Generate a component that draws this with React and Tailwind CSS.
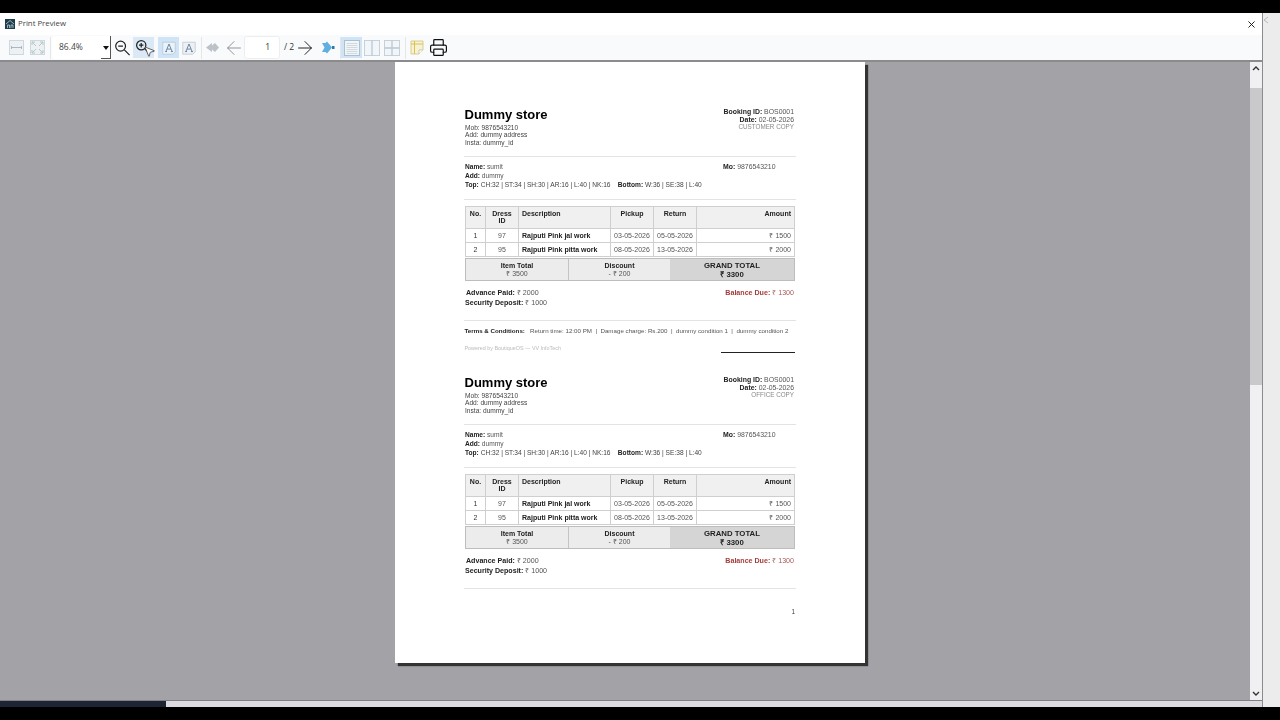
import { ArrowLeft, ArrowRight, MousePointer2, Printer, X } from 'lucide-react';

const Sep = ({ ml }) => <div className={`h-[22px] w-px bg-[#e4e6e8] ${ml}`} />;

const TextIcon = ({ boxed }) => (
  <svg viewBox="0 0 18 18" className="h-[16px] w-[16px]">
    <path d="M2 2.5h14v11l-3 2.5H2z" fill={boxed ? '#eaf3fb' : '#eef1f4'} stroke="#b5c2cd" strokeWidth="0.8" />
    <path d="M5.5 13 9 4.5 12.5 13M6.8 10.2h4.4M4.8 13h2M11.2 13h2.2" fill="none" stroke="#4f6e8c" strokeWidth="0.9" />
  </svg>
);

const Pages = ({ kind, dim }) => (
  <svg viewBox="0 0 18 18" className="h-[18px] w-[18px]">
    <rect x="1.5" y="1.5" width="15" height="15" fill="#f3f6f8" stroke={dim ? '#c6d2db' : '#aebfcc'} />
    {kind === 'one' && <path d="M3.5 4.5h11M3.5 6.5h11M3.5 8.5h11M3.5 10.5h11M3.5 12.5h11M3.5 14.5h11" stroke="#c0ccd5" strokeWidth="0.7" />}
    {kind === 'two' && <path d="M9 1.5v15" stroke="#b9c8d3" strokeWidth="1.3" />}
    {kind === 'four' && <path d="M9 1.5v15M1.5 9h15" stroke="#b9c8d3" strokeWidth="1.3" />}
  </svg>
);

const Toolbar = () => (
  <div className="flex h-[25px] items-center border-b-2 border-[#8b8b8e] bg-[#f8fafb] box-content">
    <div className="ml-[9px] flex h-[15px] w-[15px] items-center justify-center border border-[#cfd8df] bg-[#eef1f3]">
      <svg viewBox="0 0 13 13" className="h-[13px] w-[13px]"><path d="M1.5 6.5h10M1.5 5v3M11.5 5v3" stroke="#9aa9b4" strokeWidth="0.8" fill="none" /></svg>
    </div>
    <div className="ml-[6px] flex h-[15px] w-[15px] items-center justify-center border border-[#cfd8df] bg-[#eef1f3]">
      <svg viewBox="0 0 13 13" className="h-[13px] w-[13px]"><path d="m1 1 4 4M12 1 8 5M1 12l4-4M12 12 8 8M1 4V1h3M9 1h3v3M1 9v3h3M12 9v3H9" stroke="#a9c7bc" strokeWidth="0.9" fill="none" /></svg>
    </div>
    <Sep ml="ml-[5px]" />
    <div className="relative ml-[1px] flex h-[23px] w-[59px] items-center justify-between rounded-l-[3px] border-r border-[#555] bg-white pl-[7px] pr-[1px]">
      <span className="font-['Open_Sans',sans-serif] text-[8.5px] text-[#444]">86.4%</span>
      <svg viewBox="0 0 6 4" className="h-[4px] w-[6px]"><path d="M0 0h6L3 4z" fill="#111" /></svg>
      <div className="absolute bottom-0 right-0 h-px w-[9px] bg-[#555]" />
    </div>
    <div className="ml-[3px] flex w-[17px] justify-center">
      <svg viewBox="0 0 18 18" className="h-[18px] w-[18px]" fill="none" stroke="#222" strokeWidth="1.3">
        <circle cx="7" cy="7" r="5.2" /><path d="M11 11l5.5 5.5M4.5 7h5" />
      </svg>
    </div>
    <div className="relative ml-[2px] flex h-[21px] w-[21px] items-center justify-start bg-[#dbe9f6] pl-[2px]">
      <svg viewBox="0 0 18 18" className="mb-[2px] h-[16px] w-[16px]" fill="none" stroke="#222" strokeWidth="1.4">
        <circle cx="7" cy="7" r="5.2" /><path d="M11 11l5 5M4.5 7h5M7 4.5v5" />
      </svg>
      <MousePointer2 size={13} strokeWidth={1.4} className="absolute left-[10px] top-[8px] fill-white text-[#333]" />
    </div>
    <div className="ml-[4px] flex h-[21px] w-[21px] items-center justify-center bg-[#cfe4f6]"><TextIcon boxed /></div>
    <div className="flex w-[19px] justify-center"><TextIcon /></div>
    <Sep ml="ml-[3px]" />
    <div className="ml-[3px] flex w-[15px] justify-center">
      <svg viewBox="0 0 15 13" className="h-[13px] w-[15px]"><path d="M1 6.5 7 2v2.5L10 2l4 4.5-4 4.5-3-2.5V11z" fill="#bcc2c7" /></svg>
    </div>
    <div className="ml-[5px] flex w-[18px] justify-center"><ArrowLeft size={22} strokeWidth={0.9} className="shrink-0 text-[#7d8287]" /></div>
    <div className="ml-[1px] flex h-[23px] w-[36px] items-center justify-end rounded-[3px] border border-[#eceff1] bg-white pr-[9px]">
      <span className="font-['Open_Sans',sans-serif] text-[8.5px] text-[#333]">1</span>
    </div>
    <span className="ml-[4px] w-[12px] font-['Open_Sans',sans-serif] text-[8.5px] text-[#333]">/ 2</span>
    <div className="flex w-[17px] justify-center"><ArrowRight size={22} strokeWidth={1} className="shrink-0 text-[#111]" /></div>
    <div className="ml-[8px] flex w-[15px] justify-center">
      <svg viewBox="0 0 15 13" className="h-[13px] w-[15px]"><path d="M1 2h3.5L6 .5 11 6.5 6 12.5 4.5 11H1l2.5-4.5z" fill="#5fb0e0" /><path d="M11 5h2.5v3H11z" fill="#2b78ad" /></svg>
    </div>
    <Sep ml="ml-[4px]" />
    <div className="flex h-[21px] w-[21px] items-center justify-center bg-[#cfe4f6]"><Pages kind="one" /></div>
    <div className="flex w-[20px] justify-center"><Pages kind="two" dim /></div>
    <div className="flex w-[20px] justify-center"><Pages kind="four" dim /></div>
    <Sep ml="ml-[3px]" />
    <div className="ml-[3px] flex w-[16px] justify-center">
      <svg viewBox="0 0 14 15" className="h-[15px] w-[14px]"><path d="M1 1h12v9l-4 4H1z" fill="#f7f2d4" stroke="#d3c47c" strokeWidth="0.8" /><path d="M1 4h12M4.5 1v13" stroke="#d8c352" strokeWidth="1" /><path d="M9 14v-4h4" fill="#fff" stroke="#b8b8a8" strokeWidth="0.7" /></svg>
    </div>
    <div className="ml-[3px] flex w-[20px] justify-center"><Printer size={19} strokeWidth={1.5} className="text-[#111]" /></div>
  </div>
);

const rows = [
  { no: 1, id: 97, desc: 'Rajputi Pink jal work', pickup: '03-05-2026', ret: '05-05-2026', amount: '₹ 1500' },
  { no: 2, id: 95, desc: 'Rajputi Pink pitta work', pickup: '08-05-2026', ret: '13-05-2026', amount: '₹ 2000' },
];

const Slip = ({ copy, terms }) => (
  <div className="w-[332px]">
    <div className="flex justify-between pr-px">
      <div>
        <h1 className="h-4 pl-[0.5px] text-[13px] font-bold leading-4 text-black">Dummy store</h1>
        <div className="mt-[0.5px] pl-px text-[6.6px] leading-[7.7px] text-[#444]">
          <p>Mob: 9876543210</p>
          <p>Add: dummy address</p>
          <p>Insta: dummy_id</p>
        </div>
      </div>
      <div className="mt-px pr-px text-right text-[6.9px] leading-[7.5px] text-[#555]">
        <p><b className="text-[#222]">Booking ID:</b> BOS0001</p>
        <p><b className="text-[#222]">Date:</b> 02-05-2026</p>
        <p className="text-[6.3px] text-[#888]">{copy}</p>
      </div>
    </div>

    <div className="mt-[9.5px] h-px bg-[#e3e3e3]" />

    <div className="mt-[5px] flex pl-px pr-px text-[6.6px] leading-[9px] text-[#555]">
      <div className="flex-1">
        <p><b className="text-[#222]">Name:</b> sumit</p>
        <p><b className="text-[#222]">Add:</b> dummy</p>
        <p className="whitespace-nowrap text-[#444]"><b className="text-[#222]">Top:</b> CH:32 | ST:34 | SH:30 | AR:16 | L:40 | NK:16 &nbsp;&nbsp; <b className="text-[#222]">Bottom:</b> W:36 | SE:38 | L:40</p>
      </div>
      <p className="w-[72px] text-[6.9px]"><b className="text-[#222]">Mo:</b> 9876543210</p>
    </div>

    <div className="mt-[10px] h-px bg-[#e3e3e3]" />

    <table className="ml-px mt-[5.5px] w-[330px] table-fixed border-collapse text-[7px] leading-[7px] text-[#333]">
      <colgroup>
        <col className="w-[20px]" /><col className="w-[33px]" /><col className="w-[92px]" /><col className="w-[43px]" /><col className="w-[43px]" /><col />
      </colgroup>
      <thead>
        <tr className="h-[22px] bg-[#f0f0f0] align-top font-bold text-[#222]">
          <th className="border border-[#cfcfcf] pt-[3px]">No.</th>
          <th className="border border-[#cfcfcf] px-[6px] pt-[3px]">Dress ID</th>
          <th className="border border-[#cfcfcf] pt-[3px] pl-[3px] text-left">Description</th>
          <th className="border border-[#cfcfcf] pt-[3px]">Pickup</th>
          <th className="border border-[#cfcfcf] pt-[3px]">Return</th>
          <th className="border border-[#cfcfcf] pt-[3px] pr-[3px] text-right">Amount</th>
        </tr>
      </thead>
      <tbody>
        {rows.map((r) => (
          <tr key={r.no} className="h-[14px] text-center">
            <td className="border border-[#cfcfcf]">{r.no}</td>
            <td className="border border-[#cfcfcf] text-[#555]">{r.id}</td>
            <td className="border border-[#cfcfcf] pl-[3px] text-left font-bold text-[#222]">{r.desc}</td>
            <td className="border border-[#cfcfcf] text-[#555]">{r.pickup}</td>
            <td className="border border-[#cfcfcf] text-[#555]">{r.ret}</td>
            <td className="border border-[#cfcfcf] pr-[3px] text-right text-[#555]">{r.amount}</td>
          </tr>
        ))}
      </tbody>
    </table>

    <div className="ml-px mt-[1.5px] grid h-[23px] w-[330px] grid-cols-[103px_101px_1fr] border border-[#bdbdbd] text-center">
      <div className="flex flex-col justify-center border-r border-[#c4c4c4] bg-[#ececec] text-[7px] leading-[7.5px] text-[#555]">
        <b className="text-[#222]">Item Total</b>
        <span>₹ 3500</span>
      </div>
      <div className="flex flex-col justify-center bg-[#ececec] text-[7px] leading-[7.5px] text-[#555]">
        <b className="text-[#222]">Discount</b>
        <span>- ₹ 200</span>
      </div>
      <div className="flex flex-col justify-center bg-[#d5d5d5] text-[7.8px] font-bold leading-[9px] text-[#222]">
        <span>GRAND TOTAL</span>
        <span>₹ 3300</span>
      </div>
    </div>

    <div className="mt-[7px] flex justify-between pl-[2px] pr-[2px] text-[7.1px] leading-[10px] text-[#555]">
      <div>
        <p><b className="text-[#222]">Advance Paid:</b> ₹ 2000</p>
        <p className="-ml-px"><b className="text-[#222]">Security Deposit:</b> ₹ 1000</p>
      </div>
      <p className="text-[#a85a5a]"><b className="text-[#a33c3c]">Balance Due:</b> ₹ 1300</p>
    </div>

    <div className="mt-[12px] h-px bg-[#e3e3e3]" />

    {terms && (
      <>
        <p className="mt-[5.5px] whitespace-nowrap pl-[0.5px] text-[6.2px] leading-[8px] text-[#555]">
          <b className="text-[#222]">Terms &amp; Conditions:</b> &nbsp; Return time: 12:00 PM &nbsp;|&nbsp; Damage charge: Rs.200 &nbsp;|&nbsp; dummy condition 1 &nbsp;|&nbsp; dummy condition 2
        </p>
        <div className="mt-[10.5px] flex h-[8.5px] items-start justify-between pl-[0.5px] pr-px">
          <p className="text-[5.4px] leading-[6px] text-[#bbb]">Powered by BoutiqueOS — VV InfoTech</p>
          <div className="mt-[7px] h-px w-[74px] bg-[#222]" />
        </div>
      </>
    )}
  </div>
);

export default function App() {
  return (
    <div className="flex h-[720px] w-[1280px] flex-col overflow-hidden bg-black font-['Liberation_Sans',Arial,sans-serif]">
      <div className="h-[13px] shrink-0" />
      <div className="flex h-[694px] shrink-0">
        <div className="flex w-[1263px] flex-col border-r border-[#8b8b8e]">
          <div className="flex h-[22px] shrink-0 items-center bg-white pl-[5px] pr-[5px]">
            <svg viewBox="0 0 10 10" className="h-[10px] w-[10px]">
              <rect width="10" height="10" fill="#1f3d4a" />
              <path d="M1 5l4-3.5L9 5M2.5 9V6h2v3M6 9V6h2v3" stroke="#b6d3d8" strokeWidth="0.8" fill="none" />
            </svg>
            <span className="ml-[3px] font-['Open_Sans',sans-serif] text-[7.8px] text-[#444]">Print Preview</span>
            <X size={11} strokeWidth={2} className="ml-auto text-[#111]" />
          </div>
          <Toolbar />
          <div className="flex min-h-0 flex-1 bg-[#a3a2a6]">
            <div className="flex-1">
              <div className="ml-[395px] flex h-[601px] w-[470px] flex-col bg-white pl-[69px] pt-[45px] shadow-[3px_3px_1px_#333]">
                <div className="blur-[0.25px]">
                  <Slip copy="CUSTOMER COPY" terms />
                  <div className="mt-[21.5px]"><Slip copy="OFFICE COPY" /></div>
                  <p className="mt-[17.5px] w-[331px] text-right text-[6.5px] text-[#444]">1</p>
                </div>
              </div>
            </div>
            <div className="flex w-[12px] flex-col items-center bg-[#f0f0f3]">
              <svg viewBox="0 0 8 5" className="mt-[4px] h-[5px] w-[8px]"><path d="M1 4l3-3 3 3" fill="none" stroke="#333" strokeWidth="1.4" /></svg>
              <div className="mt-[17px] h-[297px] w-full bg-[#c9c9cb]" />
              <div className="flex-1" />
              <svg viewBox="0 0 8 5" className="mb-[4px] h-[5px] w-[8px]"><path d="M1 1l3 3 3-3" fill="none" stroke="#333" strokeWidth="1.4" /></svg>
            </div>
          </div>
          <div className="flex h-[7px] shrink-0 border-t border-[#808084] bg-[#dcdce0]">
            <div className="h-full w-[166px] bg-[#1e2433]" />
          </div>
        </div>
        <div className="flex-1 bg-[#ececec] pt-[3px]">
          <svg viewBox="0 0 6 8" className="h-[8px] w-[6px]"><path d="M5 1 1 4l4 3" fill="none" stroke="#aaa" strokeWidth="0.8" /></svg>
        </div>
      </div>
    </div>
  );
}
